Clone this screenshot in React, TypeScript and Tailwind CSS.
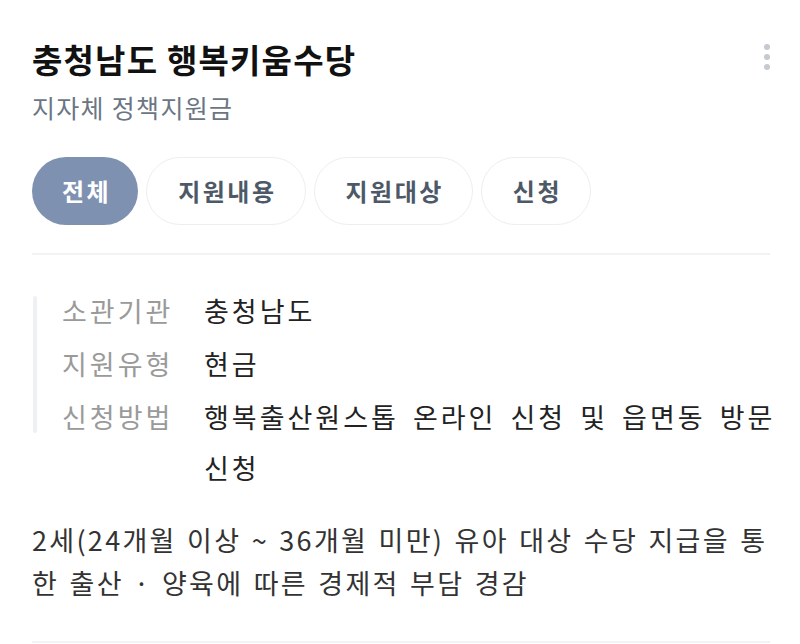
import React from "react";

const font = { fontFamily: '"Noto Sans CJK KR", "Noto Sans", sans-serif' };

export default function App() {
  const tabs = ["전체", "지원내용", "지원대상", "신청"];
  const rows: [string, string][] = [
    ["소관기관", "충청남도"],
    ["지원유형", "현금"],
    ["신청방법", "행복출산원스톱 온라인 신청 및 읍면동 방문 신청"],
  ];
  return (
    <div style={font} className="w-[800px] h-[644px] bg-white overflow-hidden pl-[32px] pr-[30px]">
      <div className="flex items-start justify-between pt-[36px]">
        <div className="flex flex-col">
          <h1 className="text-[33px] leading-[46px] font-bold text-[#111111] tracking-[1.2px]">충청남도 행복키움수당</h1>
          <p className="text-[25px] leading-[34px] text-[#6b7684] mt-[8px] tracking-[1.3px]">지자체 정책지원금</p>
        </div>
        <div className="flex flex-col gap-[4px] pt-[8px]">
          <span className="block w-[6px] h-[6px] rounded-full bg-[#c5c9d0]" />
          <span className="block w-[6px] h-[6px] rounded-full bg-[#c5c9d0]" />
          <span className="block w-[6px] h-[6px] rounded-full bg-[#c5c9d0]" />
        </div>
      </div>

      <div className="flex gap-[8px] mt-[33px]">
        {tabs.map((t, i) =>
          i === 0 ? (
            <div key={t} className="h-[68px] pl-[30px] pr-[27px] rounded-full bg-[#7f91b0] flex items-center justify-center text-white text-[24px] font-bold tracking-[2.5px]">
              {t}
            </div>
          ) : (
            <div key={t} className="h-[68px] pl-[31px] pr-[28px] rounded-full border border-[#eceef1] bg-white flex items-center justify-center text-[#4e5968] text-[24px] font-semibold tracking-[2.5px]">
              {t}
            </div>
          )
        )}
      </div>

      <div className="h-[2px] bg-[#f2f3f5] mt-[28px]" />

      <div className="flex mt-[30px] -mr-[8px]">
        <div className="w-[4px] ml-[1px] rounded-full bg-[#eef0f3] h-[137px] mt-[11px] shrink-0" />
        <div className="flex flex-col pl-[25px] gap-[2px] flex-1">
          {rows.map(([k, v]) => (
            <div key={k} className="flex text-[27px] leading-[51px] tracking-[3px]">
              <div className="w-[142px] shrink-0 text-[#9a9a9a]">{k}</div>
              <div className="flex-1 text-[#222222] [word-spacing:5px]">{v}</div>
            </div>
          ))}
        </div>
      </div>

      <p className="mt-[25px] text-[27px] leading-[43px] text-[#333333] tracking-[2.3px] [word-spacing:2px]">
        2세(24개월 이상 ~ 36개월 미만) 유아 대상 수당 지급을 통한 출산 · 양육에 따른 경제적 부담 경감
      </p>

      <div className="h-[2px] bg-[#f2f3f5] mt-[37px]" />
    </div>
  );
}
